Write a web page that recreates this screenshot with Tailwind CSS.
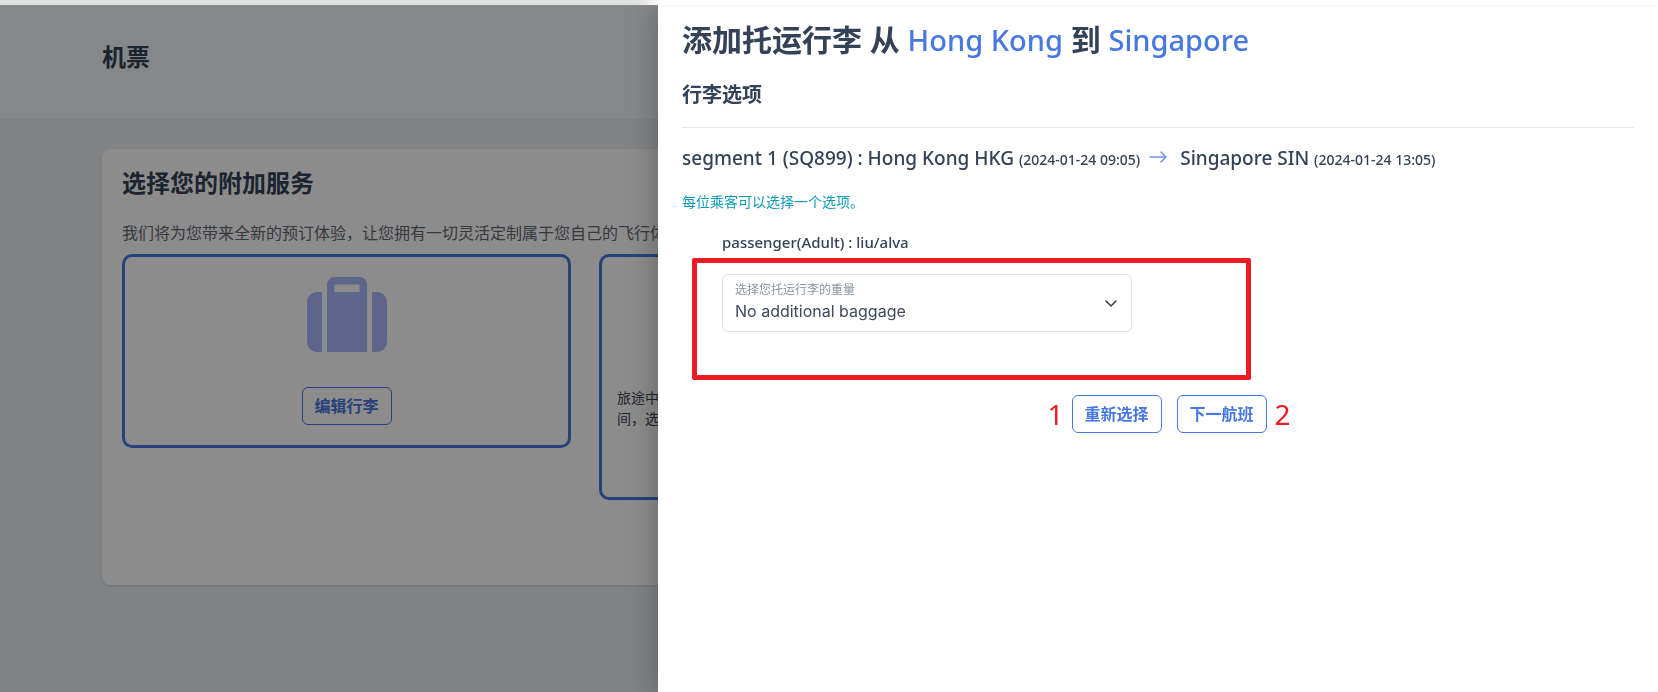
<!DOCTYPE html>
<html lang="zh-CN">
<head>
    <meta charset="UTF-8">
    <meta name="viewport" content="width=device-width, initial-scale=1.0">
    <title>机票</title>
    <script src="https://cdn.jsdelivr.net/npm/@tailwindcss/browser@4"></script>
</head>
<body class="min-h-screen overflow-hidden bg-[#ebedf0] text-[#334257] font-['Noto_Sans','Noto_Sans_CJK_SC',sans-serif]">

    <!-- Page header -->
    <header class="pt-[5px] bg-[#f4f6f7]">
        <h1 class="px-[102px] pt-[34px] pb-11 text-2xl leading-9 font-bold">机票</h1>
    </header>

    <!-- Extra services -->
    <main class="pt-[30px] pl-[102px]">
        <section class="h-[436px] px-5 pt-[18px] bg-white rounded-lg shadow-sm overflow-hidden">
            <h2 class="text-2xl leading-8 font-bold">选择您的附加服务</h2>
            <p class="mt-[22px] text-base leading-6 text-[#5f6973] whitespace-nowrap">我们将为您带来全新的预订体验，让您拥有一切灵活定制属于您自己的飞行体</p>
            <div class="mt-[9px] flex items-start gap-7">
                <div class="w-[449px] h-[194px] flex flex-col items-center border-3 border-[#4777e0] rounded-[10px]">
                    <svg class="mt-[15px] size-20" viewBox="0 0 512 512" fill="#a9bbfb">
                        <path fill-rule="evenodd" d="M128 512h256V80c0-26.500-21.500-48-48-48H176c-26.500 0-48 21.500-48 48zM184 80h144q8 0 8 8v40H176V88q0-8 8-8z"/>
                        <path d="M512 192v256c0 35-29 64-64 64h-32V128h32c35 0 64 29 64 64zM96 512H64c-35 0-64-29-64-64V192c0-35 29-64 64-64h32z"/>
                    </svg>
                    <button class="mt-[35px] w-[90px] h-[38px] border border-[#4777e0] rounded-md text-base font-bold text-[#4777e0]">编辑行李</button>
                </div>
                <div class="w-[449px] h-[246px] px-[15px] pt-[130px] border-3 border-[#4777e0] rounded-[10px]">
                    <p class="text-sm leading-[21px]">旅途中<br>间，选</p>
                </div>
            </div>
        </section>
    </main>

    <!-- Backdrop -->
    <div class="fixed inset-0 bg-black/45"></div>

    <!-- Baggage drawer -->
    <aside class="fixed inset-y-0 right-0 w-[1000px] max-w-full px-6 pt-5 bg-white shadow-[0_8px_32px_rgba(0,0,0,0.3)]">
        <h2 class="text-3xl leading-10 font-bold">添加托运行李 从 <span class="text-[29px] font-medium text-[#4777e0]">Hong Kong</span> 到 <span class="text-[29px] font-medium text-[#4777e0]">Singapore</span></h2>
        <h3 class="mt-5 pb-[18px] text-xl leading-[29px] font-bold border-b border-[#e6e6e6]">行李选项</h3>
        <div class="mt-[15px] flex items-baseline text-[19px] leading-[30px] font-medium">
            <span>segment 1 (SQ899) : Hong Kong HKG <span class="text-sm">(2024-01-24 09:05)</span></span>
            <svg class="mx-2 w-5 h-4" viewBox="0 0 20 16" fill="none" stroke="#6f93f5" stroke-width="1.500" stroke-linecap="round" stroke-linejoin="round"><path d="M2 8h16M13 3l5 5-5 5"/></svg>
            <span class="ml-1">Singapore SIN <span class="text-sm">(2024-01-24 13:05)</span></span>
        </div>
        <p class="mt-[19px] text-sm leading-5 text-[#0e9bb5]">每位乘客可以选择一个选项。</p>

        <div class="mt-[18px] pl-10">
            <h4 class="text-[15px] leading-6 font-medium">passenger(Adult) : liu/alva</h4>
            <div class="relative mt-5 w-[410px]">
                <select id="baggage" class="block w-full h-[58px] pt-4 pl-3 pr-9 appearance-none bg-white border border-[#dde0e8] rounded-md text-base text-[#3f4a5f] font-[Inter]">
                    <option>No additional baggage</option>
                </select>
                <label for="baggage" class="absolute left-[13px] top-2 text-xs leading-4 text-[#8a929d]">选择您托运行李的重量</label>
                <svg class="absolute right-[13px] top-[21px] size-4" viewBox="0 0 16 16" fill="none" stroke="#343a40" stroke-width="1.500" stroke-linecap="round" stroke-linejoin="round"><path d="m3 6 5 5 5-5"/></svg>
                <!-- Callout around the baggage choice -->
                <div class="absolute -left-[30px] -top-4 w-[559px] h-[122px] border-[5px] border-[#ed1c24] rounded-[2px] pointer-events-none"></div>
            </div>
        </div>

        <div class="mt-[63px] pl-[22px] flex justify-center items-center text-[#4777e0]">
            <span class="mr-2 text-[28px] leading-[38px] text-[#ed1c24]">1</span>
            <button class="w-[90px] h-[38px] border border-[#4777e0] rounded-md text-base font-bold">重新选择</button>
            <button class="ml-[15px] w-[90px] h-[38px] border border-[#4777e0] rounded-md text-base font-bold">下一航班</button>
            <span class="ml-2 text-[28px] leading-[38px] text-[#ed1c24]">2</span>
        </div>
    </aside>

    <!-- Strip along the top edge -->
    <div class="fixed inset-x-0 top-0 h-[5px] flex">
        <div class="grow bg-[#dfe1e0]"></div>
        <div class="w-6 bg-linear-to-r from-[#dfe1e0] to-white"></div>
        <div class="w-[996px] bg-white shadow-[0_1px_4px_rgba(0,0,0,0.06)]"></div>
    </div>

</body>
</html>
